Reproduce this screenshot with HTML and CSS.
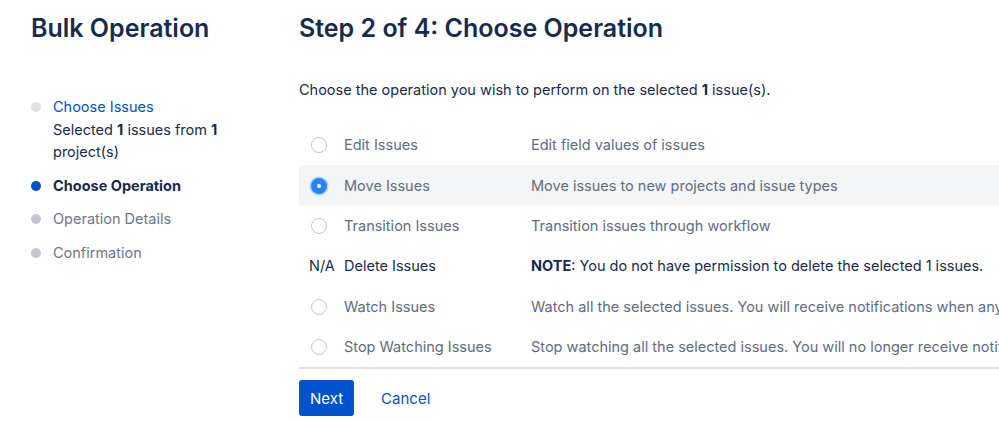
FILE: index.html
```html
<!DOCTYPE html>
<html lang="en">
<head>
  <meta charset="UTF-8">
  <title>Bulk Operation</title>
  <link rel="stylesheet" href="styles.css">
</head>
<body>
  <div class="page">
    <!-- Steps sidebar -->
    <div class="sidebar">
      <h1>Bulk Operation</h1>
      <ul class="steps">
        <li class="step done">
          <a href="#">Choose Issues</a>
          <div>Selected <b>1</b> issues from <b>1</b> project(s)</div>
        </li>
        <li class="step current">Choose Operation</li>
        <li class="step">Operation Details</li>
        <li class="step">Confirmation</li>
      </ul>
    </div>

    <!-- Main content -->
    <div class="main">
      <h1>Step 2 of 4: Choose Operation</h1>
      <p class="intro">Choose the operation you wish to perform on the selected <b>1</b> issue(s).</p>

      <table class="ops">
        <colgroup>
          <col class="col-pick">
          <col class="col-name">
          <col>
        </colgroup>
        <tr>
          <td class="pick"><span class="radio"></span></td>
          <td>Edit Issues</td>
          <td>Edit field values of issues</td>
        </tr>
        <tr class="selected">
          <td class="pick"><span class="radio checked"></span></td>
          <td>Move Issues</td>
          <td>Move issues to new projects and issue types</td>
        </tr>
        <tr>
          <td class="pick"><span class="radio"></span></td>
          <td>Transition Issues</td>
          <td>Transition issues through workflow</td>
        </tr>
        <tr class="na">
          <td class="pick">N/A</td>
          <td>Delete Issues</td>
          <td><b>NOTE</b>: You do not have permission to delete the selected 1 issues.</td>
        </tr>
        <tr>
          <td class="pick"><span class="radio"></span></td>
          <td>Watch Issues</td>
          <td>Watch all the selected issues. You will receive notifications when any of these issues are updated.</td>
        </tr>
        <tr>
          <td class="pick"><span class="radio"></span></td>
          <td>Stop Watching Issues</td>
          <td>Stop watching all the selected issues. You will no longer receive notifications for these issues.</td>
        </tr>
      </table>

      <div class="actions">
        <button class="next">Next</button>
        <a href="#" class="cancel">Cancel</a>
      </div>
    </div>
  </div>
</body>
</html>
```

FILE: styles.css
```css
body {
  margin: 0;
  font-family: Inter, "Noto Sans", sans-serif;
  font-size: 14.5px;
  color: #172b4d;
  background-color: #ffffff;
  overflow: hidden;
}

.page {
  display: flex;
  padding-top: 12px;
}

h1 {
  margin: 0;
  font-size: 25px;
  line-height: 32px;
  font-weight: 600;
  color: #172b4d;
}

.sidebar {
  flex: 0 0 268px;
  padding-left: 31px;
}

.steps {
  list-style: none;
  margin: 52px 0 0;
  padding: 0;
  width: 215px;
}

.step {
  position: relative;
  padding-left: 22px;
  line-height: 22.5px;
  margin-bottom: 11px;
  color: #6b778c;
}

.step::before {
  content: "";
  position: absolute;
  left: 0;
  top: 6px;
  width: 10px;
  height: 10px;
  border-radius: 50%;
  background-color: #c1c7d0;
}

.step.done::before {
  background-color: #dfe1e6;
}

.step.done {
  color: #172b4d;
}

.step.done a {
  color: #0052cc;
  text-decoration: none;
}

.step.current {
  font-weight: 700;
  color: #172b4d;
}

.step.current::before {
  background-color: #0052cc;
}

.main {
  flex: 1;
  min-width: 0;
}

.intro {
  margin: 35px 0 24px;
  line-height: 22px;
}

.ops {
  table-layout: fixed;
  border-collapse: collapse;
  white-space: nowrap;
  width: 760px;
  border-bottom: 2px solid #dfe1e6;
}

.col-pick {
  width: 45px;
}

.col-name {
  width: 187px;
}

.ops td {
  height: 40.4px;
  padding: 0;
  line-height: 22px;
  color: #5e6c84;
  vertical-align: middle;
  overflow: hidden;
}

.ops tr.selected td {
  background-color: #f4f5f7;
}

.ops tr.na td {
  color: #172b4d;
}

.ops .pick {
  padding-left: 10px;
}

.radio {
  display: block;
  width: 16px;
  height: 16px;
  margin-left: 2px;
  border: 1px solid #c1c7d0;
  border-radius: 50%;
  background-color: #ffffff;
  box-sizing: border-box;
}

.radio.checked {
  position: relative;
  border: none;
  background-color: #2684ff;
  box-shadow: 0 0 0 1.5px #b3d4ff;
}

.radio.checked::after {
  content: "";
  position: absolute;
  left: 6px;
  top: 6px;
  width: 4px;
  height: 4px;
  border-radius: 50%;
  background-color: #ffffff;
}

.actions {
  display: flex;
  align-items: center;
  gap: 27px;
  margin-top: 11px;
}

.next {
  height: 36px;
  padding: 0 11px;
  border: none;
  border-radius: 3px;
  background-color: #0052cc;
  color: #ffffff;
  font-family: inherit;
  font-size: 15px;
  cursor: pointer;
}

.cancel {
  color: #0052cc;
  text-decoration: none;
  font-size: 15px;
}
```
